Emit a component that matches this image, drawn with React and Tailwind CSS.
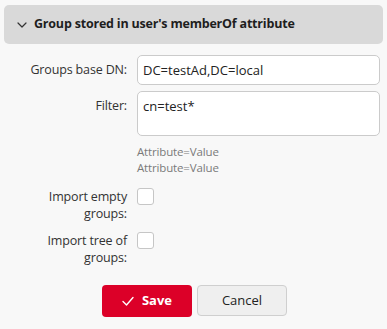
import React, { useState } from "react";

const Chevron = () => (
  <svg width="10" height="6" viewBox="0 0 10 6" fill="none" className="shrink-0">
    <path d="M1 1l4 4 4-4" stroke="#333" strokeWidth="1.2" strokeLinecap="round" strokeLinejoin="round" />
  </svg>
);

const Check = () => (
  <svg width="12" height="10" viewBox="0 0 12 10" fill="none">
    <path d="M1 5.5l3.5 3.5L11 1.5" stroke="#fff" strokeWidth="1.4" strokeLinecap="round" strokeLinejoin="round" />
  </svg>
);

const App = () => {
  const [baseDn, setBaseDn] = useState("DC=testAd,DC=local");
  const [filter, setFilter] = useState("cn=test*");
  const [importEmpty, setImportEmpty] = useState(false);
  const [importTree, setImportTree] = useState(false);

  return (
    <div
      className="w-[387px] h-[329px] bg-[#f8f8f8] text-[#333] text-[13px] pt-[5px]"
      style={{ fontFamily: '"Open Sans", "Noto Sans", sans-serif' }}
    >
      <div className="mx-[4px] h-[39px] bg-[#d9d9d9] rounded-[5px] flex items-center pl-[13px] gap-[7px]">
        <Chevron />
        <span className="font-bold text-[12.5px] text-[#1e1e1e] tracking-[-0.2px]">
          Group stored in user's memberOf attribute
        </span>
      </div>

      <div className="grid grid-cols-[127px_243px] gap-x-[10px] mt-[11px] text-[12.5px] tracking-[-0.15px]">
        <label className="text-right self-center leading-[16px]">Groups base DN:</label>
        <input
          className="h-[30px] bg-white border border-[#cbcbcb] rounded-[5px] px-[5px] text-[13px] tracking-normal text-[#222] outline-none"
          value={baseDn}
          onChange={(e) => setBaseDn(e.target.value)}
        />

        <label className="text-right pt-[7px] mt-[6px] leading-[16px]">Filter:</label>
        <textarea
          className="h-[45px] mt-[6px] bg-white border border-[#cbcbcb] rounded-[5px] px-[5px] py-[6px] text-[13px] tracking-normal leading-[16px] text-[#222] outline-none resize-none"
          value={filter}
          onChange={(e) => setFilter(e.target.value)}
          spellCheck="true"
        />

        <div />
        <div className="mt-[8px] text-[11.5px] leading-[16px] text-[#7a7a7a]">
          <div>Attribute=Value</div>
          <div>Attribute=Value</div>
        </div>

        <label className="text-right mt-[12px] leading-[17px]">
          Import empty
          <br />
          groups:
        </label>
        <div className="mt-[12px]">
          <button
            onClick={() => setImportEmpty(!importEmpty)}
            className="w-[17px] h-[17px] bg-white border border-[#c6c6c6] rounded-[3px] flex items-center justify-center"
          >
            {importEmpty && <span className="text-[11px]">✓</span>}
          </button>
        </div>

        <label className="text-right mt-[10px] leading-[17px]">
          Import tree of
          <br />
          groups:
        </label>
        <div className="mt-[10px]">
          <button
            onClick={() => setImportTree(!importTree)}
            className="w-[17px] h-[17px] bg-white border border-[#c6c6c6] rounded-[3px] flex items-center justify-center"
          >
            {importTree && <span className="text-[11px]">✓</span>}
          </button>
        </div>
      </div>

      <div className="flex justify-center gap-[5px] mt-[19px] pl-[2px]">
        <button className="w-[90px] h-[32px] bg-[#dc0028] rounded-[4px] text-white font-bold text-[13px] flex items-center justify-center gap-[8px]">
          <Check />
          Save
        </button>
        <button className="w-[90px] h-[31px] bg-[#efefef] border border-[#cfcfcf] rounded-[4px] text-[#222] text-[13px]">
          Cancel
        </button>
      </div>
    </div>
  );
};

export default App;
